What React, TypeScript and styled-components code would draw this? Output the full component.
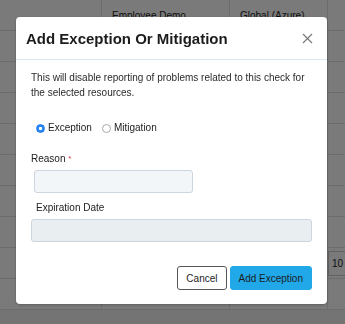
import React, { useState } from 'react';
import styled, { createGlobalStyle } from 'styled-components';

const GlobalStyle = createGlobalStyle`
  html, body {
    margin: 0;
    padding: 0;
    background: #f2f2f2;
    font-family: "Liberation Sans", Arial, sans-serif;
    overflow: hidden;
  }
`;

const rows = [
  ['', 'Employee Demo', 'Global (Azure)'],
  ['', '', ''],
  ['', '', ''],
  ['', '', ''],
  ['', '', ''],
  ['', '', ''],
  ['', '', ''],
  ['', '', ''],
  ['', '', ''],
  ['', '', ''],
];

/**
 * 例外・緩和の追加ダイアログ
 */
export default function App() {
  const [kind, setKind] = useState<'exception' | 'mitigation'>('exception');

  return (
    <>
      <GlobalStyle />
      <Table>
        <tbody>
          {rows.map((row, i) => (
            <tr key={i}>
              {row.map((cell, j) => (
                <Cell key={j}>{cell}</Cell>
              ))}
              <PagerCell>{i === 8 && <PageSize>10</PageSize>}</PagerCell>
            </tr>
          ))}
        </tbody>
      </Table>

      <Backdrop>
        <Modal>
          <Header>
            <Title>Add Exception Or Mitigation</Title>
            <CloseButton aria-label="Close">
              <svg width="11" height="11" viewBox="0 0 11 11">
                <path d="M1 1L10 10M10 1L1 10" stroke="#7a7a7a" strokeWidth="1.2" fill="none" />
              </svg>
            </CloseButton>
          </Header>

          <Body>
            <Description>
              This will disable reporting of problems related to this check for the selected resources.
            </Description>

            <RadioGroup>
              <RadioLabel>
                <Radio name="kind" checked={kind === 'exception'} onChange={() => setKind('exception')} />
                Exception
              </RadioLabel>
              <RadioLabel>
                <Radio name="kind" checked={kind === 'mitigation'} onChange={() => setKind('mitigation')} />
                Mitigation
              </RadioLabel>
            </RadioGroup>

            <FieldLabel>
              Reason <Required>*</Required>
            </FieldLabel>
            <TextInput $width={159} $indent={3} $bg="#f3f6f8" />

            <FieldLabel $indent={5} $top={8}>Expiration Date</FieldLabel>
            <TextInput $bg="#e9eef1" disabled />
          </Body>

          <Footer>
            <Button $variant="outline">Cancel</Button>
            <Button $variant="primary">Add Exception</Button>
          </Footer>
        </Modal>
      </Backdrop>
    </>
  );
}

const Table = styled.table`
  border-collapse: collapse;
  table-layout: fixed;
  width: 345px;
  background: #fff;
  font-size: 10px;
  color: #222;
`;

const Cell = styled.td`
  height: 30px;
  padding: 0 10px;
  border-bottom: 1px solid #dde1e5;
  border-right: 1px solid #dde1e5;
  white-space: nowrap;
  overflow: hidden;

  &:nth-child(1) { width: 81px; }
  &:nth-child(2) { width: 107px; }
  &:nth-child(3) { width: 77px; }
`;

const PagerCell = styled.td`
  border-bottom: 1px solid #dde1e5;
  padding: 0;
  overflow: hidden;
`;

const PageSize = styled.span`
  display: inline-block;
  border: 1px solid #ccc;
  border-right: 0;
  padding: 6px 2px 6px 3px;
  font-size: 10px;
`;

const Backdrop = styled.div`
  position: fixed;
  inset: 0;
  background: rgba(0, 0, 0, 0.52);
  padding: 17px 0 0 16px;
`;

const Modal = styled.div`
  width: 311px;
  background: #fff;
  border-radius: 4px;
  box-shadow: 0 1px 3px rgba(0, 0, 0, 0.25);
  display: flex;
  flex-direction: column;
`;

const Header = styled.div`
  height: 42px;
  padding: 0 10px;
  display: flex;
  align-items: center;
  justify-content: space-between;
  border-bottom: 1px solid #dfe7ee;
`;

const Title = styled.h2`
  margin: 1px 0 0;
  font-size: 15px;
  font-weight: bold;
  color: #1c1c1c;
`;

const CloseButton = styled.button`
  border: 0;
  background: none;
  padding: 0;
  margin: 1px 4px 0 0;
  display: flex;
  cursor: pointer;
`;

const Body = styled.div`
  padding: 11px 15px 0;
  display: flex;
  flex-direction: column;
  align-items: flex-start;
`;

const Description = styled.p`
  margin: 0;
  font-size: 10px;
  line-height: 14.5px;
  color: #2a2a2a;
`;

const RadioGroup = styled.div`
  display: flex;
  gap: 10px;
  margin: 21px 0 0 5px;
`;

const RadioLabel = styled.label`
  display: flex;
  align-items: center;
  font-size: 10px;
  line-height: 14px;
  color: #222;
`;

const Radio = styled.input.attrs({ type: 'radio' })`
  appearance: none;
  width: 9px;
  height: 9px;
  margin: 0 3px 0 0;
  border-radius: 50%;
  border: 1px solid #a8a8a8;
  background: #fff;
  box-sizing: border-box;

  &:checked {
    border-color: #1d7df0;
    background: radial-gradient(circle, #fff 0 1.3px, #2b86f4 1.9px);
  }
`;

const FieldLabel = styled.div<{ $indent?: number; $top?: number }>`
  margin: ${p => p.$top ?? 17}px 0 0 ${p => p.$indent ?? 0}px;
  font-size: 10px;
  line-height: 14px;
  color: #222;
`;

const Required = styled.span`
  color: #d9363e;
  font-size: 8px;
  vertical-align: top;
`;

const TextInput = styled.input<{ $width?: number; $indent?: number; $bg: string }>`
  box-sizing: border-box;
  width: ${p => (p.$width ? `${p.$width}px` : '100%')};
  height: 23px;
  margin: 4px 0 0 ${p => p.$indent ?? 0}px;
  border: 1px solid #cdd6de;
  border-radius: 3px;
  background: ${p => p.$bg};
  outline: none;
`;

const Footer = styled.div`
  display: flex;
  justify-content: flex-end;
  gap: 3px;
  padding: 24px 15px 14px;
`;

const Button = styled.button<{ $variant: 'outline' | 'primary' }>`
  height: 24px;
  padding: 0 8px;
  font-family: inherit;
  font-size: 10px;
  color: #1c1c1c;
  border-radius: 3px;
  cursor: pointer;
  border: 1px solid ${p => (p.$variant === 'primary' ? '#20a8e8' : '#555')};
  background: ${p => (p.$variant === 'primary' ? '#20a8e8' : '#fff')};
`;
